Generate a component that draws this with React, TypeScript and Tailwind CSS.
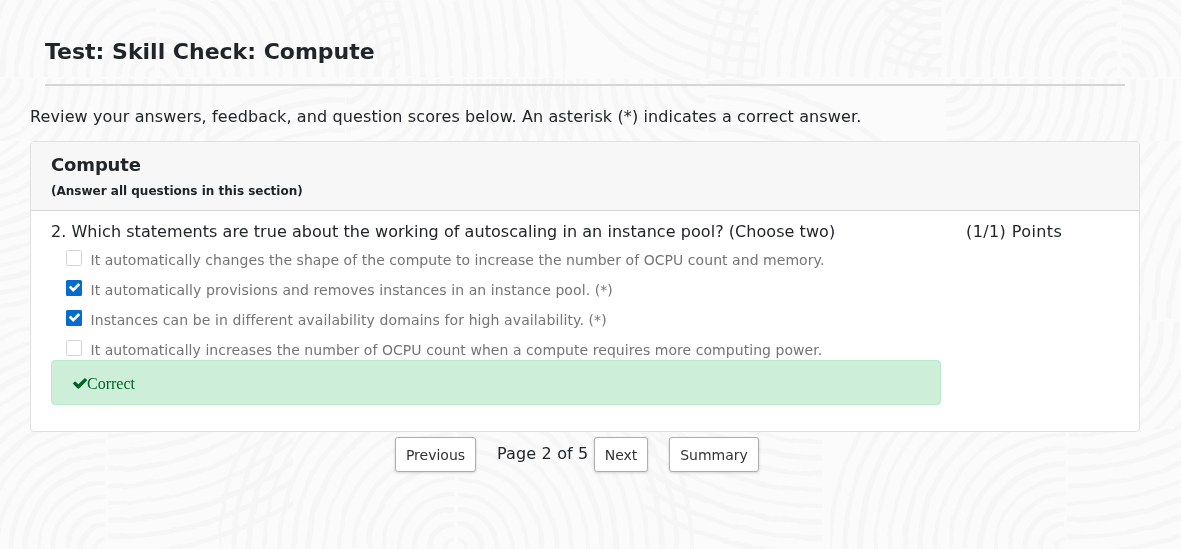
import React from "react";

type Rings = { cx: number; cy: number; from: number; to: number; gap: number; x: number; y: number; w: number; h: number };

const RINGS: Rings[] = [
  { cx: 158, cy: 77, from: 9, to: 420, gap: 14.2, x: 160, y: 0, w: 416, h: 77 },
  { cx: 156, cy: 77, from: 9, to: 172, gap: 14.5, x: -14, y: 0, w: 170, h: 77 },
  { cx: 1117, cy: 77, from: 9, to: 200, gap: 14.5, x: 946, y: 0, w: 171, h: 77 },
  { cx: 1121, cy: 77, from: 9, to: 180, gap: 13, x: 1122, y: 0, w: 60, h: 77 },
  { cx: 950, cy: 77, from: 10, to: 190, gap: 14.7, x: 761, y: 0, w: 180, h: 77 },
  { cx: 760, cy: -135, from: 148, to: 228, gap: 16, x: 572, y: 0, w: 187, h: 80 },
  { cx: 960, cy: 90, from: 205, to: 258, gap: 16, x: 705, y: 0, w: 55, h: 78 },
  { cx: 940, cy: -60, from: 60, to: 140, gap: 14, x: 884, y: 0, w: 57, h: 77 },
  { cx: 400, cy: 77, from: 10, to: 80, gap: 14, x: 345, y: 0, w: 55, h: 77 },
  { cx: -14, cy: 79, from: 8, to: 238, gap: 13.8, x: -14, y: 79, w: 240, h: 62 },
  { cx: 946, cy: 79, from: 8, to: 238, gap: 13.8, x: 946, y: 79, w: 240, h: 62 },
  { cx: 345, cy: 345, from: 170, to: 262, gap: 15, x: 190, y: 80, w: 155, h: 61 },
  { cx: 346, cy: 79, from: 8, to: 240, gap: 14, x: 346, y: 79, w: 240, h: 62 },
  { cx: 705, cy: 79, from: 8, to: 240, gap: 14, x: 465, y: 79, w: 240, h: 62 },
  { cx: 707, cy: 355, from: 194, to: 275, gap: 16, x: 708, y: 80, w: 225, h: 61 },
  { cx: 105, cy: 549, from: 10, to: 255, gap: 14, x: 0, y: 317, w: 105, h: 232 },
  { cx: 1065, cy: 549, from: 10, to: 235, gap: 15, x: 830, y: 429, w: 235, h: 120 },
  { cx: 108, cy: 200, from: 235, to: 365, gap: 17, x: 108, y: 429, w: 185, h: 120 },
  { cx: 1068, cy: 200, from: 235, to: 365, gap: 17, x: 1068, y: 429, w: 114, h: 120 },
  { cx: 454, cy: 549, from: 10, to: 240, gap: 15, x: 219, y: 429, w: 235, h: 120 },
  { cx: 457, cy: 549, from: 10, to: 240, gap: 15, x: 458, y: 429, w: 236, h: 120 },
  { cx: 822, cy: 200, from: 242, to: 365, gap: 16, x: 645, y: 429, w: 177, h: 120 },
  { cx: -30, cy: 90, from: 70, to: 230, gap: 13.5, x: 0, y: 141, w: 30, h: 176 },
  { cx: 1370, cy: 320, from: 185, to: 290, gap: 15.5, x: 1140, y: 141, w: 41, h: 179 },
  { cx: 1066, cy: 322, from: 82, to: 160, gap: 14.5, x: 1140, y: 322, w: 41, h: 107 },
];

function Backdrop() {
  return (
    <svg className="absolute inset-0 -z-10" width="1181" height="549" aria-hidden="true">
      <defs>
        {RINGS.map((r, i) => (
          <clipPath key={i} id={`tile-${i}`}>
            <rect x={r.x} y={r.y} width={r.w} height={r.h} />
          </clipPath>
        ))}
        <filter id="wobble" x="0" y="0" width="1181" height="549" filterUnits="userSpaceOnUse">
          <feTurbulence type="fractalNoise" baseFrequency="0.05" numOctaves="1" seed="4" />
          <feDisplacementMap in="SourceGraphic" scale="4" xChannelSelector="R" yChannelSelector="G" />
        </filter>
      </defs>
      <g filter="url(#wobble)">
        {RINGS.map((r, i) => (
          <g key={i} clipPath={`url(#tile-${i})`} fill="none" stroke="#f6f6f6">
            {Array.from({ length: Math.floor((r.to - r.from) / r.gap) + 1 }, (_, n) => (
              <circle key={n} cx={r.cx} cy={r.cy} r={r.from + n * r.gap} strokeWidth={3.8 + ((n * 7) % 4) * 0.6} />
            ))}
          </g>
        ))}
      </g>
    </svg>
  );
}

function Check({ className }: { className: string }) {
  return (
    <svg viewBox="121 334 1550 1188" fill="currentColor" className={className} aria-hidden="true">
      <path d="M1671 566q0 40-28 68l-724 724-136 136q-28 28-68 28t-68-28l-136-136-362-362q-28-28-28-68t28-68l136-136q28-28 68-28t68 28l294 295 656-657q28-28 68-28t68 28l136 136q28 28 28 68z" />
    </svg>
  );
}

const OPTIONS = [
  { text: "It automatically changes the shape of the compute to increase the number of OCPU count and memory.", checked: false, tracking: "tracking-[0.05px]" },
  { text: "It automatically provisions and removes instances in an instance pool. (*)", checked: true, tracking: "tracking-[0.09px]" },
  { text: "Instances can be in different availability domains for high availability. (*)", checked: true, tracking: "tracking-[0.1px]" },
  { text: "It automatically increases the number of OCPU count when a compute requires more computing power.", checked: false, tracking: "tracking-[0.055px]" },
];

function Button({ children, className }: { children: string; className: string }) {
  return (
    <button className={`h-[35px] shrink-0 whitespace-nowrap rounded-[3px] border border-[#adadad] bg-white pt-[2px] text-[14px] text-[#333] shadow-[0_1px_3px_rgba(0,0,0,0.16)] ${className}`}>
      {children}
    </button>
  );
}

export default function App() {
  return (
    <div className="relative isolate flex h-[549px] w-[1181px] flex-col overflow-hidden bg-[#fbfbfb] pl-[30px] pr-[41px] font-['DejaVu_Sans',sans-serif] text-[16px] text-[#212529]">
      <Backdrop />
      <header className="mx-[15px] flex h-[86px] w-[1080px] shrink-0 border-b-2 border-[#d5d5d5] pt-[37px]">
        <h1 className="h-[30px] whitespace-nowrap text-[22px] font-bold leading-[30px]">Test: Skill Check: Compute</h1>
      </header>
      <p className="mt-[19px] h-6 whitespace-nowrap leading-6 tracking-[0.118px]">
        Review your answers, feedback, and question scores below. An asterisk (*) indicates a correct answer.
      </p>
      <section className="mt-[12px] flex h-[291px] shrink-0 flex-col overflow-hidden rounded-[4px] border border-[#dfdfdf] bg-white">
        <div className="h-[69px] shrink-0 border-b border-[#d7d7d7] bg-[#f7f7f7] px-5 pt-[11px]">
          <h2 className="text-[18px] font-bold leading-6 tracking-[-0.15px]">Compute</h2>
          <p className="pt-[5px] text-[12px] font-bold leading-[18px]">(Answer all questions in this section)</p>
        </div>
        <div className="flex pl-5 pt-[9px]">
          <div className="w-[890px]">
            <p className="h-6 whitespace-nowrap leading-6 tracking-[0.05px]">2. Which statements are true about the working of autoscaling in an instance pool? (Choose two)</p>
            <ul className="h-[116px] pl-[15px]">
              {OPTIONS.map((o) => (
                <li key={o.text} className="flex h-[30px] pt-[6px]">
                  <span className={`flex size-4 shrink-0 items-center justify-center rounded-[1.5px] ${o.checked ? "bg-[#056cce] pb-px text-white" : "border border-[#d3d3d3] bg-white"}`}>
                    {o.checked && <Check className="h-[9px] w-[11px]" />}
                  </span>
                  <span className={`ml-[8.5px] whitespace-nowrap pt-[1px] text-[14px] leading-[18px] text-[#747474] ${o.tracking}`}>{o.text}</span>
                </li>
              ))}
            </ul>
            <div className="flex h-[45px] items-center rounded-[4px] border border-[#b8e8c8] bg-[#cdefda] pl-[20.5px] pt-[2px] font-['Liberation_Serif',serif] text-[#006325]">
              <Check className="h-[11px] w-[14px]" />
              <span className="ml-[0.5px]">Correct</span>
            </div>
          </div>
          <p className="ml-[25px] whitespace-nowrap leading-6 tracking-[0.4px]">(1/1) Points</p>
        </div>
      </section>
      <nav className="flex pl-[365px] pt-[5px]">
        <Button className="w-[81px]">Previous</Button>
        <span className="ml-[21px] w-[97px] whitespace-nowrap pt-[5px] leading-6 tracking-[0.15px]">Page 2 of 5</span>
        <Button className="w-[54px]">Next</Button>
        <Button className="ml-[21px] w-[90px]">Summary</Button>
      </nav>
    </div>
  );
}
